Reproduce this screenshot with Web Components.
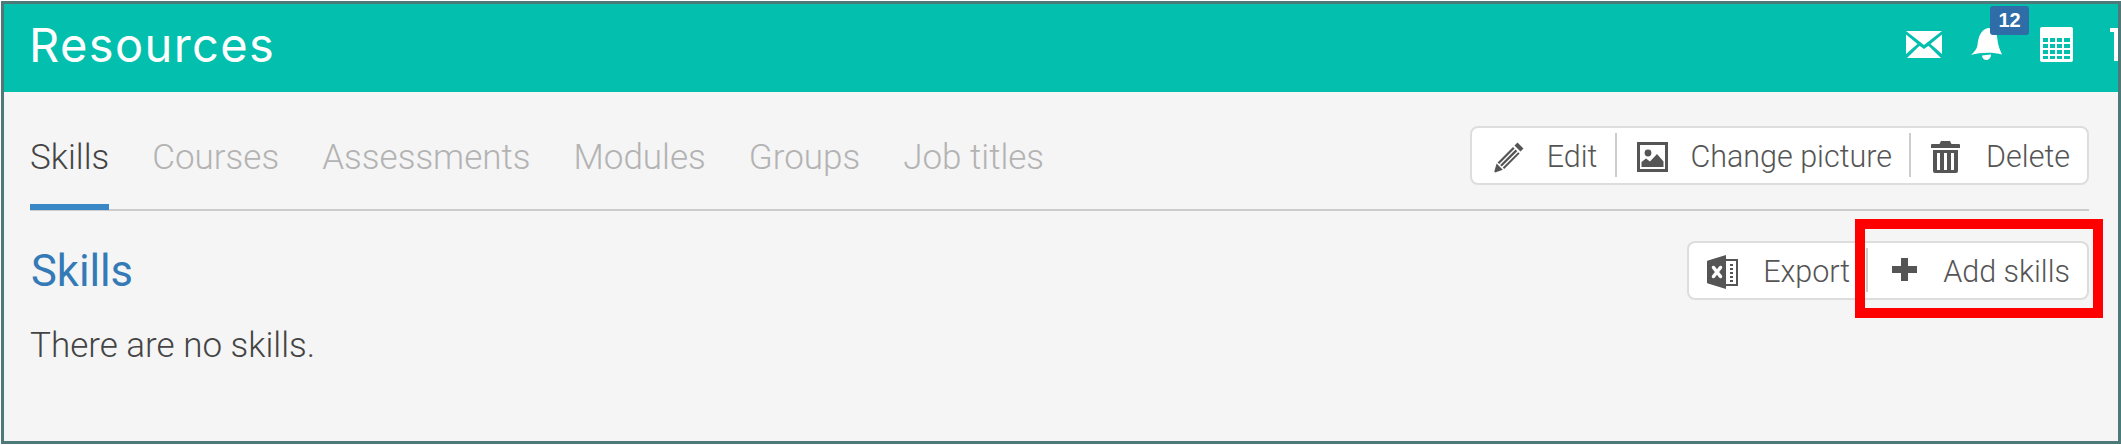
<!DOCTYPE html>
<html>
<head>
<meta charset="utf-8">
<title>Resources</title>
<style>
html, body { margin: 0; padding: 0; background: #fff; }
body { width: 2121px; height: 445px; overflow: hidden; font-family: Roboto, sans-serif; }
</style>
</head>
<body>
<app-frame>
  <page-header title="Resources"></page-header>
  <tab-bar>
    <btn-group>
      <tool-btn icon="pencil" pad="21,22,19">Edit</tool-btn>
      <tool-btn icon="picture" pad="21,22,18" sep>Change picture</tool-btn>
      <tool-btn icon="trash" pad="21,26,17" sep>Delete</tool-btn>
    </btn-group>
  </tab-bar>
  <skills-section>
    <btn-group>
      <tool-btn icon="excel" pad="18,25,17">Export</tool-btn>
      <tool-btn icon="plus" pad="25,26,17" sep>Add skills</tool-btn>
    </btn-group>
  </skills-section>
</app-frame>

<script>
const ICONS = {
  pencil: '<svg width="32" height="32" viewBox="0 0 32 32" fill="#555"><path d="M24.500 1.500l6 6-3 3-6-6zM20 6l1.600 1.600L6.200 23l-1.600-1.600zM22.600 8.600l1.600 1.600L8.800 25.600 7.200 24zM25.200 11.200l1.400 1.400-15.400 15.400-1.400-1.400zM3.600 22.600l6.200 6.200-7.600 2.600-.9-.9z"/></svg>',
  picture: '<svg width="31" height="30" viewBox="0 0 31 30"><path fill="#555" fill-rule="evenodd" d="M0 0h31v30H0zM3 3v24h25V3z"/><circle cx="11" cy="11" r="3.400" fill="#555"/><path fill="#555" d="M4.500 25v-5l4.500-3.500 4 3 7-7.500 6.500 7.500V25z"/></svg>',
  trash: '<svg width="29" height="32" viewBox="0 0 29 32" fill="#555"><path fill-rule="evenodd" d="M10 0h9l1.500 3H28a1 1 0 0 1 1 1v3H0V4a1 1 0 0 1 1-1h7.500zM2 9h25v21a2 2 0 0 1-2 2H4a2 2 0 0 1-2-2zm4 3v17h3V12zm7 0v17h3V12zm7 0v17h3V12z"/></svg>',
  excel: '<svg width="31" height="34" viewBox="0 0 31 34"><path fill="#555" d="M1 5.500L19 0v34L1 28.500a1 1 0 0 1-1-1v-21a1 1 0 0 1 1-1zM19 4h12v27H19v-2h10V6H19z"/><path fill="none" stroke="#fff" stroke-width="3.500" stroke-linecap="round" d="M6.500 12.500l7 9M13.500 12.500l-7 9"/><path fill="#555" d="M23 9h3v2h-3zM23 13h3v2h-3zM23 17h3v2h-3zM23 21h3v2h-3zM23 25h3v2h-3z"/></svg>',
  plus: '<svg style="margin-top:-5px" width="25" height="23" viewBox="0 0 25 23" fill="#555"><path d="M9 0h7v8h9v7h-9v8H9v-8H0V8h9z"/></svg>',
};

class AppFrame extends HTMLElement {
  constructor() {
    super()
    this.attachShadow({ mode: 'open' }).innerHTML = `
      <style>
        :host {
          display: block;
          position: relative;
          box-sizing: border-box;
          margin: 1px 1px 0 1px;
          width: 2120px;
          height: 443px;
          border: 3px solid #4d7a78;
          background: #f5f5f5;
          overflow: hidden;
        }
      </style>
      <slot></slot>
    `
  }
}

class PageHeader extends HTMLElement {
  constructor() {
    super()
    this.attachShadow({ mode: 'open' }).innerHTML = `
      <style>
        :host {
          display: flex;
          align-items: center;
          justify-content: space-between;
          box-sizing: border-box;
          height: 88px;
          padding: 0 0 8px 25px;
          background: #03bfad;
          color: #fff;
          overflow: hidden;
        }
        h1 {
          margin: 0;
          font: 400 47px/1 Inter, sans-serif;
          letter-spacing: 1.400px;
        }
        .icons { display: flex; align-items: center; flex: none; margin-right: -10px; }
        .bell { position: relative; display: flex; margin: 0 37px 0 29px; }
        .badge {
          position: absolute;
          left: 19px;
          top: -21px;
          width: 39px;
          height: 29px;
          border-radius: 3px;
          background: #2f6da8;
          font: 700 20px/29px "Liberation Sans", sans-serif;
          text-align: center;
        }
        .cut { margin-left: 37px; }
      </style>
      <h1>${this.getAttribute('title')}</h1>
      <div class="icons">
        <svg width="36" height="27" viewBox="0 0 36 27"><path fill="#fff" d="M0 0h36L18 14zM0 3.500L11.500 13 0 23zM36 3.500L24.500 13 36 23zM13.500 14.800L18 18l4.500-3.200L35 27H1z"/></svg>
        <span class="bell">
          <svg width="32" height="34" viewBox="0 0 32 34"><path fill="#fff" d="M17 1c7 0 9 5 9.500 12 .4 5 2.500 10 4.500 14.500C22 25 9 25.500 0 28c2.800-2.500 6-6 6.500-10 .8-7 2.500-15 10.500-17zM11 28.500l9-1c0 3-2 5.500-4.500 5.500S11 31 11 28.500z"/></svg>
          <span class="badge">12</span>
        </span>
        <svg width="33" height="35" viewBox="0 0 33 35"><path fill="#fff" fill-rule="evenodd" d="M2 0h29a2 2 0 0 1 2 2v31a2 2 0 0 1-2 2H2a2 2 0 0 1-2-2V2a2 2 0 0 1 2-2zM3 11v4h5v-4zm7 0v4h5v-4zm7 0v4h5v-4zm7 0v4h6v-4zM3 17v4h5v-4zm7 0v4h5v-4zm7 0v4h5v-4zm7 0v4h6v-4zM3 23v4h5v-4zm7 0v4h5v-4zm7 0v4h5v-4zm7 0v4h6v-4zM3 29v3h5v-3zm7 0v3h5v-3zm7 0v3h5v-3zm7 0v3h6v-3z"/></svg>
        <svg class="cut" width="18" height="33" viewBox="0 0 18 33"><path fill="#fff" d="M0 0h18v4H8v29H4V4H0z"/></svg>
      </div>
    `
  }
}

class TabBar extends HTMLElement {
  constructor() {
    super()
    const tabs = ['Skills', 'Courses', 'Assessments', 'Modules', 'Groups', 'Job titles']
    this.attachShadow({ mode: 'open' }).innerHTML = `
      <style>
        :host {
          display: flex;
          justify-content: space-between;
          box-sizing: border-box;
          height: 119px;
          margin: 0 29px 0 26px;
          border-bottom: 2px solid #ccc;
        }
        nav { display: flex; gap: 43px; }
        a {
          box-sizing: content-box;
          height: 112px;
          border-bottom: 6px solid transparent;
          color: #b3b3b3;
          font: 300 35px/132px Roboto, sans-serif;
          white-space: nowrap;
        }
        a.active { color: #444; border-bottom-color: #3a87c8; }
        .tools { padding-top: 34px; }
      </style>
      <nav>${tabs.map((t, i) => `<a class="${i === 0 ? 'active' : ''}">${t}</a>`).join('')}</nav>
      <div class="tools"><slot></slot></div>
    `
  }
}

class BtnGroup extends HTMLElement {
  constructor() {
    super()
    this.attachShadow({ mode: 'open' }).innerHTML = `
      <style>
        :host {
          display: inline-flex;
          align-items: stretch;
          box-sizing: border-box;
          height: 59px;
          background: #fff;
          border: 2px solid #ddd;
          border-radius: 8px;
        }
      </style>
      <slot></slot>
    `
  }
}

class ToolBtn extends HTMLElement {
  constructor() {
    super()
    const [left, gap, right] = this.getAttribute('pad').split(',')
    this.attachShadow({ mode: 'open' }).innerHTML = `
      <style>
        :host {
          display: flex;
          align-items: center;
          position: relative;
          gap: ${gap}px;
          padding: 3px ${right}px 0 ${left}px;
          color: #555;
          font: 300 30.500px/1 Roboto, sans-serif;
          white-space: nowrap;
        }
        :host([sep])::before {
          content: "";
          position: absolute;
          left: -1px;
          top: 5px;
          bottom: 6px;
          width: 2px;
          background: #ccc;
        }
        svg { display: block; flex: none; }
      </style>
      ${ICONS[this.getAttribute('icon')]}
      <span><slot></slot></span>
    `
  }
}

class SkillsSection extends HTMLElement {
  constructor() {
    super()
    this.attachShadow({ mode: 'open' }).innerHTML = `
      <style>
        :host {
          display: block;
          position: relative;
          margin: 0 29px 0 27px;
          padding-top: 30px;
        }
        .head { display: flex; justify-content: space-between; align-items: center; }
        h2 { margin: 2px 0 0; color: #337ab7; font: 400 43.500px/1 Roboto, sans-serif; }
        p { margin: 25px 0 0 -1px; color: #444; font: 300 35px/1.2 Roboto, sans-serif; }
        .mark {
          position: absolute;
          right: -14px;
          top: 8px;
          box-sizing: border-box;
          width: 248px;
          height: 99px;
          border: 10px solid #fe0000;
        }
      </style>
      <div class="head"><h2>Skills</h2><slot></slot></div>
      <p>There are no skills.</p>
      <div class="mark"></div>
    `
  }
}

customElements.define('app-frame', AppFrame)
customElements.define('page-header', PageHeader)
customElements.define('tab-bar', TabBar)
customElements.define('btn-group', BtnGroup)
customElements.define('tool-btn', ToolBtn)
customElements.define('skills-section', SkillsSection)
</script>
</body>
</html>
